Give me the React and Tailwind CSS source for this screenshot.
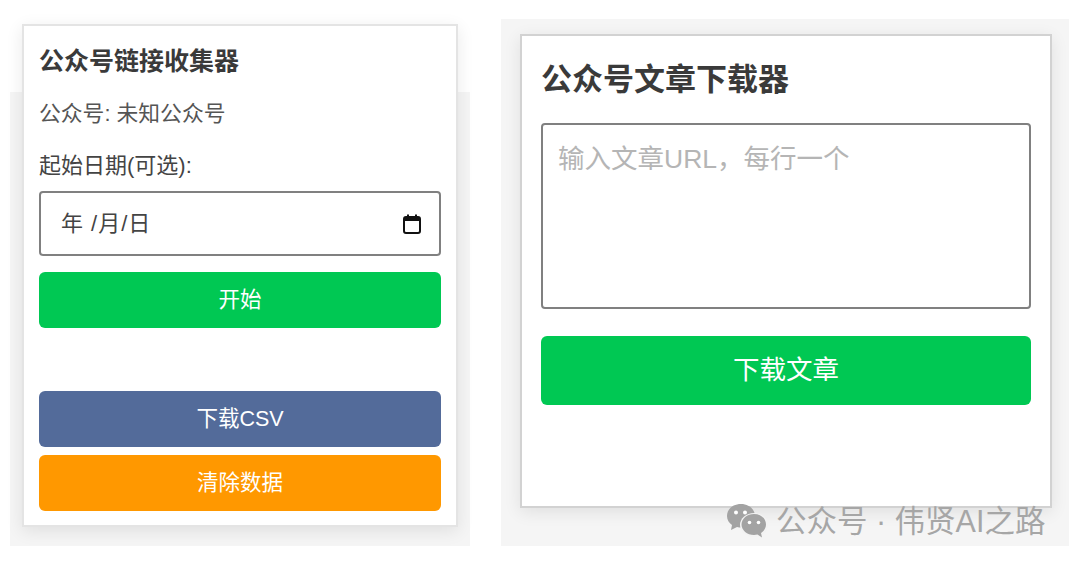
import React from "react";

const font = "font-['Liberation_Sans','Noto_Sans_CJK_SC',sans-serif]";

const ActionButton = ({ className, children }) => (
  <button
    className={`flex w-full items-center justify-center rounded-[6px] text-white ${className}`}
  >
    {children}
  </button>
);

const CalendarIcon = () => (
  <svg width="18" height="20" viewBox="0 0 18 20" fill="none">
    <rect x="1" y="3" width="16" height="16" rx="2" stroke="#111" strokeWidth="2" />
    <rect x="1" y="3" width="16" height="4" fill="#111" />
    <rect x="4" y="0.5" width="2" height="3" fill="#111" />
    <rect x="12" y="0.5" width="2" height="3" fill="#111" />
  </svg>
);

const WechatIcon = () => (
  <svg width="42" height="36" viewBox="0 0 42 36">
    <path d="M15 1C7 1 1 6 1 13c0 4 2 7 5 9l-1 5 6-3c1.500.4 3 .6 4 .6 8 0 14-5 14-11.600S23 1 15 1z" fill="#a3a3a3" />
    <ellipse cx="28" cy="22" rx="14" ry="12" fill="#f3f3f3" />
    <path d="M28 11c-7 0-12.500 4.700-12.500 10.500S21 32 28 32c1.200 0 2.400-.2 3.500-.5l4.500 3-1-4.500c3-2 5-5 5-8.500C40 15.700 35 11 28 11z" fill="#a3a3a3" />
    <circle cx="10" cy="9.500" r="2" fill="#fff" />
    <circle cx="19" cy="9.500" r="2" fill="#fff" />
    <circle cx="23.500" cy="19.500" r="1.800" fill="#fff" />
    <circle cx="32.500" cy="19.500" r="1.800" fill="#fff" />
  </svg>
);

const App = () => {
  return (
    <div className={`relative flex h-[565px] w-[1080px] overflow-hidden bg-white ${font}`}>
      <div className="ml-[10px] mt-[92px] h-[454px] w-[460px] bg-[#f5f5f5] px-[12px]">
        <div className="-mt-[68px] flex h-[503px] flex-col border-2 border-[#e4e4e4] bg-white px-[15px] shadow-[0_4px_16px_rgba(0,0,0,0.09)]">
          <h2 className="mt-[19px] text-[25px] font-bold leading-[32px] text-[#3a3a3a]">
            公众号链接收集器
          </h2>
          <p className="mt-[22px] text-[21.800px] leading-[30px] text-[#555]">公众号: 未知公众号</p>
          <label className="mt-[22px] text-[22px] leading-[30px] text-[#444]">起始日期(可选):</label>
          <div className="mt-[10px] flex h-[65px] items-center justify-between rounded-[4px] border-2 border-[#808080] pl-[20px] pr-[18px] text-[22px] tracking-[1px] text-[#444]">
            <span>年 /月/日</span>
            <CalendarIcon />
          </div>
          <ActionButton className="mt-[16px] h-[56px] bg-[#00c853] text-[21.500px]">开始</ActionButton>
          <ActionButton className="mt-[63px] h-[56px] bg-[#536b9a] text-[21.500px]">下载CSV</ActionButton>
          <ActionButton className="mt-[8px] h-[56px] bg-[#ff9800] text-[21.500px]">清除数据</ActionButton>
        </div>
      </div>

      <div className="ml-[31px] mt-[19px] h-[527px] w-[568px] bg-[#f5f5f5] pl-[19px] pt-[15px]">
        <div className="flex h-[474px] w-[532px] flex-col border-2 border-[#d2d2d2] bg-white px-[19px] shadow-[0_4px_16px_rgba(0,0,0,0.09)]">
          <h2 className="mt-[24px] text-[31px] font-bold leading-[40px] text-[#3a3a3a]">
            公众号文章下载器
          </h2>
          <textarea
            readOnly
            placeholder="输入文章URL，每行一个"
            className="mt-[23px] h-[186px] w-full resize-none rounded-[4px] border-2 border-[#808080] px-[15px] py-[16px] text-[26.500px] leading-[36px] placeholder:text-[#b5b5b5]"
          />
          <ActionButton className="mt-[27px] h-[69px] bg-[#00c853] text-[26.500px]">下载文章</ActionButton>
        </div>
      </div>

      <div className="absolute left-[726px] top-[503px] flex items-center gap-[8px] text-[30.500px] leading-[36px] text-[#a6a6a6]">
        <WechatIcon />
        <span>公众号 · 伟贤AI之路</span>
      </div>
    </div>
  );
};

export default App;
